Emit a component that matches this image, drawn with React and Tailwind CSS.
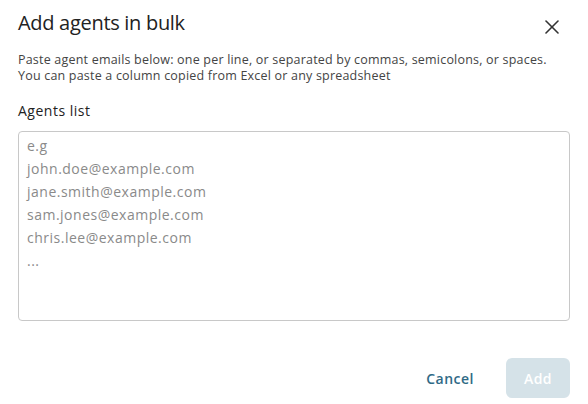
import { useState } from 'react';

const placeholder = `e.g
john.doe@example.com
jane.smith@example.com
sam.jones@example.com
chris.lee@example.com
...`;

export default function App() {
  const [value, setValue] = useState('');

  return (
    <div className="w-[588px] h-[404px] bg-white px-[18px] font-['Open_Sans',sans-serif] text-[#2b2b2b]">
      {/* Header */}
      <div className="flex items-start justify-between pt-[9px]">
        <h2 className="text-[20px] leading-[28px] font-medium tracking-[-0.3px] text-[#222]">Add agents in bulk</h2>
        <button className="mt-[11px] mr-[11px] text-[#333]" aria-label="Close">
          <svg width="14" height="14" viewBox="0 0 14 14" fill="none" stroke="currentColor" strokeWidth="1.6" strokeLinecap="round">
            <line x1="1" y1="1" x2="13" y2="13" />
            <line x1="13" y1="1" x2="1" y2="13" />
          </svg>
        </button>
      </div>

      <p className="mt-[15px] text-[12.5px] leading-[16px] tracking-[0.2px] text-[#444]">
        Paste agent emails below: one per line, or separated by commas, semicolons, or spaces.
        <br />
        You can paste a column copied from Excel or any spreadsheet
      </p>

      <label className="block mt-[17px] text-[14px] leading-[20px] font-medium tracking-[0.5px] text-[#222]">Agents list</label>

      <textarea
        value={value}
        onChange={(e) => setValue(e.target.value)}
        placeholder={placeholder}
        className="mt-[10px] block w-full h-[190px] resize-none rounded-[4px] border border-[#c8c8c8] px-[8px] pt-[2px] text-[14px] leading-[23px] tracking-[0.5px] text-[#333] placeholder:text-[#8a8a8a] outline-none"
      />

      {/* Footer */}
      <div className="flex items-center justify-end gap-[8px] mt-[37px]">
        <button className="h-[40px] px-[24px] text-[14px] font-semibold tracking-[0.5px] text-[#2f6a86]">Cancel</button>
        <button disabled className="h-[40px] w-[64px] rounded-[6px] bg-[#d5e2e8] text-[14px] font-semibold tracking-[0.4px] text-white">
          Add
        </button>
      </div>
    </div>
  );
}
